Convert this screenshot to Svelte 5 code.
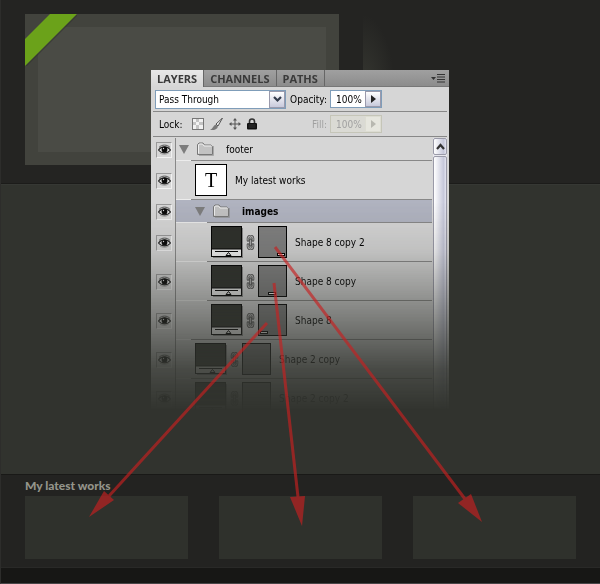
<script lang="ts">
  // ── Types ──────────────────────────────────────────────────────────

  type Kind = "group" | "text" | "shape";

  interface Layer {
    name: string;
    kind: Kind;
    level: number;
    rule: number;
    marker?: number;
    selected?: boolean;
  }

  // ── Data ───────────────────────────────────────────────────────────

  const tabs = ["LAYERS", "CHANNELS", "PATHS"];

  // level indents the row, rule is the depth its bottom line starts at
  const layers: Layer[] = [
    { name: "footer", kind: "group", level: 0, rule: 0 },
    { name: "My latest works", kind: "text", level: 1, rule: 0 },
    { name: "images", kind: "group", level: 1, rule: 1, selected: true },
    { name: "Shape 8 copy 2", kind: "shape", level: 2, rule: 1, marker: 18 },
    { name: "Shape 8 copy", kind: "shape", level: 2, rule: 1, marker: 9 },
    { name: "Shape 8", kind: "shape", level: 2, rule: 0, marker: 1 },
    { name: "Shape 2 copy", kind: "shape", level: 1, rule: 0 },
    { name: "Shape 2 copy 2", kind: "shape", level: 1, rule: 0 },
  ];

  const works = [1, 2, 3];

  let active = $state("LAYERS");
  let blend = $state("Pass Through");
  let opacity = $state("100%");
  let fill = $state("100%");
</script>

<div class="page">
  <!-- Site mockup -->
  <header class="hero">
    <div class="slide">
      <svg class="ribbon" viewBox="0 0 52 52" aria-hidden="true">
        <path d="M26 0H54L0 54V27Z" fill="#2e302b" opacity="0.5" />
        <path d="M25 0H52L0 52V25Z" fill="#6ba21a" />
      </svg>
    </div>
    <div class="glow"></div>
  </header>

  <main class="middle"></main>

  <footer class="footer">
    <h2>My latest works</h2>
    <div class="works">
      {#each works as work (work)}
        <div class="work"></div>
      {/each}
    </div>
  </footer>
  <div class="bottom"></div>

  <!-- Layers panel -->
  <section class="panel">
    <div class="tabs">
      {#each tabs as tab}
        <button class="tab" class:active={active === tab} onclick={() => (active = tab)}>
          {tab}
        </button>
      {/each}
      <button class="menu" aria-label="Panel menu">
        <svg width="14" height="9" viewBox="0 0 14 9">
          <path d="M0 3H5L2.500 6Z" fill="#333" />
          <path d="M6 .5H14M6 3H14M6 5.500H14M6 8H14" stroke="#333" />
        </svg>
      </button>
    </div>

    <div class="controls">
      <div class="combo">
        <select aria-label="Blend mode" bind:value={blend}>
          <option>Pass Through</option>
          <option>Normal</option>
        </select>
        <span class="arrow">
          <svg width="9" height="7" viewBox="0 0 9 7"><path d="M1 1L4.500 4.500L8 1" fill="none" stroke="#333c4c" stroke-width="2.200" /></svg>
        </span>
      </div>
      <div class="field">
        <label for="opacity">Opacity:</label>
        <div class="amount">
          <input id="opacity" type="text" bind:value={opacity} />
          <button aria-label="Opacity slider">
            <svg width="5" height="8" viewBox="0 0 5 8"><path d="M0 0L5 4L0 8Z" fill="#222" /></svg>
          </button>
        </div>
      </div>
    </div>

    <div class="controls">
      <div class="locks">
        <span class="locks-label">Lock:</span>
        <button aria-label="Lock transparent pixels">
          <svg width="12" height="12" viewBox="0 0 12 12">
            <rect x=".5" y=".5" width="11" height="11" fill="#f2f2f2" stroke="#777" />
            <path d="M1 4H4V1H7V4H11V7H7V11H4V7H1Z" fill="#c4c4c4" />
            <rect x="4" y="4" width="3" height="3" fill="#f2f2f2" />
          </svg>
        </button>
        <button aria-label="Lock image pixels">
          <svg width="13" height="13" viewBox="0 0 13 13">
            <path d="M12.500 0L6 6L8 8Z" fill="#eee" stroke="#555" />
            <path d="M5.500 6.500L8 8.500C7 11.500 4 12.500 0 12C3 10.500 3 8 5.500 6.500Z" fill="#777" />
          </svg>
        </button>
        <button aria-label="Lock position">
          <svg width="12" height="12" viewBox="0 0 12 12">
            <path d="M6 1V11M1 6H11" stroke="#555" />
            <path d="M6 0L8 2.500H4ZM6 12L8 9.500H4ZM0 6L2.500 4V8ZM12 6L9.500 4V8Z" fill="#555" />
          </svg>
        </button>
        <button aria-label="Lock all">
          <svg width="10" height="12" viewBox="0 0 10 12">
            <path d="M2.500 6V3.500A2.500 2.500 0 0 1 7.500 3.500V6" fill="none" stroke="#333" stroke-width="1.600" />
            <rect x="0" y="5" width="10" height="6.500" rx="1" fill="#111" />
            <path d="M1.500 7H8.500M1.500 9H8.500" stroke="#555" stroke-width=".6" />
          </svg>
        </button>
      </div>
      <div class="field disabled">
        <label for="fill">Fill:</label>
        <div class="amount">
          <input id="fill" type="text" bind:value={fill} disabled />
          <button aria-label="Fill slider" disabled>
            <svg width="5" height="8" viewBox="0 0 5 8"><path d="M0 0L5 4L0 8Z" fill="#b8b8b0" /></svg>
          </button>
        </div>
      </div>
    </div>

    <div class="list">
      <ul>
        {#each layers as layer}
          <li class="{layer.kind} level-{layer.level} rule-{layer.rule}" class:selected={layer.selected}>
            <div class="visibility">
              <button aria-label="Toggle {layer.name}">
                <svg width="13" height="11" viewBox="0 0 13 11">
                  <path d="M1 3.500C3.500 .3 9.500 .3 12 3.500" fill="none" stroke="#555" />
                  <path d="M.5 6C3.500 1.800 9.500 1.800 12.500 6C9.500 9.800 3.500 9.800 .5 6Z" fill="#e8e8e8" stroke="#222" stroke-width="1.200" />
                  <circle cx="6.500" cy="5.500" r="2.900" fill="#080808" />
                  <circle cx="5.500" cy="4.500" r=".7" fill="#ddd" />
                  <path d="M2 9C5 11 9 10.500 11 8.500" fill="none" stroke="#888" stroke-width=".7" />
                </svg>
              </button>
            </div>

            <div class="content">
              {#if layer.kind === "group"}
                <svg class="twirl" width="10" height="9" viewBox="0 0 10 9"><path d="M0 0H10L5 9Z" fill="#7d7d7d" /></svg>
                <svg class="folder" width="17" height="14" viewBox="0 0 17 14">
                  <path d="M2 13.500H16.500V4" fill="none" stroke="#888" opacity=".6" />
                  <path d="M.5 12.500V2.500L2 1H6L7.500 3H14L15.500 4.500V12.500Z" fill="#c2c2c2" stroke="#777" />
                  <path d="M1.500 11.500V3L2.500 2H5.500L7 4H14.500" fill="none" stroke="#eee" />
                </svg>
              {:else if layer.kind === "text"}
                <span class="type-thumb">T</span>
              {:else}
                <svg width="32" height="32" viewBox="0 0 32 32">
                  <rect x="2" y="2" width="30" height="30" fill="#000" opacity=".35" />
                  <rect x=".5" y=".5" width="30" height="30" fill="#f4f4f4" stroke="#000" />
                  <rect x="1" y="1" width="29" height="22" fill="#2d2f2a" />
                  <path d="M1 23H30" stroke="#000" />
                  <path d="M4 25.500H27M15 29.500L17.500 26.500L20 29.500Z" fill="none" stroke="#000" />
                </svg>
                <svg class="link" width="9" height="15" viewBox="0 0 9 15">
                  <path d="M2 5.500V3.500A2.500 2.500 0 0 1 7 3.500V5.500M2 9.500V11.500A2.500 2.500 0 0 0 7 11.500V9.500" fill="none" stroke="#555" stroke-width="2.600" stroke-linecap="round" />
                  <path d="M2 5.500V3.500A2.500 2.500 0 0 1 7 3.500V5.500M2 9.500V11.500A2.500 2.500 0 0 0 7 11.500V9.500" fill="none" stroke="#c4c4c4" stroke-width="1" />
                  <path d="M4.500 3.500V11.500" stroke="#333" stroke-width="2.400" />
                  <path d="M4.500 4.500V10.500" stroke="#ccc" stroke-width=".8" />
                </svg>
                <svg width="29" height="32" viewBox="0 0 29 32">
                  <rect x=".5" y=".5" width="28" height="31" fill="#808080" stroke="#000" />
                  {#if layer.marker}
                    <rect x={layer.marker + 1.5} y="27.500" width="7" height="2" fill="#fff" stroke="#000" />
                  {/if}
                </svg>
              {/if}
              <span class="name">{layer.name}</span>
            </div>
          </li>
        {/each}
      </ul>

      <div class="scrollbar">
        <button aria-label="Scroll up">
          <svg width="9" height="7" viewBox="0 0 9 7"><path d="M1 6L4.500 2L8 6" fill="none" stroke="#333" stroke-width="2.200" /></svg>
        </button>
        <div class="thumb"></div>
      </div>
    </div>
  </section>

  <!-- Arrows from each mask to its box -->
  <svg class="arrows" width="600" height="584" viewBox="0 0 600 584" aria-hidden="true">
    <g stroke="#c82020" stroke-width="3">
      <path d="M267 323L109 496" />
      <path d="M274 283L298 497" />
      <path d="M275 247L465 499" />
    </g>
    <g fill="#c82020">
      <path d="M89 517L104 491L114 500Z" />
      <path d="M302 526L290 497L305 496Z" />
      <path d="M482 522L458 503L471 494Z" />
    </g>
  </svg>
</div>

<style>
  :global(body) {
    background: #232321;
  }

  .page {
    position: relative;
    display: flex;
    flex-direction: column;
    min-height: 100vh;
    box-sizing: border-box;
    border-left: 1px solid #2d2d2b;
    border-bottom: 1px solid #484648;
    background: #242422;
    font-family: "DejaVu Sans Condensed", "Liberation Sans", sans-serif;
    font-size: 10px;
    color: #000;
  }

  button,
  input,
  select {
    margin: 0;
    padding: 0;
    border: 0;
    background: none;
    font: inherit;
    color: inherit;
  }

  button {
    display: flex;
    align-items: center;
    justify-content: center;
  }

  svg {
    display: block;
    flex-shrink: 0;
  }

  /* ── Site mockup ─────────────────────────────────────────────────── */

  .hero {
    display: flex;
    gap: 24px;
    padding: 14px 24px 18px;
    border-bottom: 1px solid #1c1c1a;
  }

  .slide {
    box-sizing: border-box;
    width: 314px;
    height: 151px;
    border: 13px solid #42433d;
    background: #4a4b45;
    position: relative;
  }

  .ribbon {
    position: absolute;
    top: -13px;
    left: -13px;
    width: 52px;
    height: 52px;
  }

  .glow {
    width: 32px;
    background: radial-gradient(ellipse at left center, #363731, #242422 70%);
  }

  .middle {
    flex: 1;
    border-top: 1px solid #363834;
    background: #31332e;
  }

  .footer {
    padding: 4px 24px 8px;
    border-top: 1px solid #191917;
    border-bottom: 1px solid #292927;
    background: #232321;
  }

  .footer h2 {
    margin: 0 0 4px;
    font-family: Lato, sans-serif;
    font-size: 12px;
    font-weight: 900;
    line-height: 13px;
    color: #93948a;
  }

  .works {
    display: grid;
    grid-template-columns: repeat(3, 1fr);
    gap: 31px;
  }

  .work {
    height: 63px;
    background: #2f312c;
  }

  .bottom {
    height: 15px;
    background: #171715;
  }

  /* ── Panel ───────────────────────────────────────────────────────── */

  .panel {
    position: absolute;
    top: 70px;
    left: 0;
    right: 1px;
    width: 298px;
    margin: 0 auto;
    background: #d6d6d6;
    mask-image: linear-gradient(
      #000 38%,
      rgb(0 0 0 / 87%) 52%,
      rgb(0 0 0 / 64%) 63%,
      rgb(0 0 0 / 38%) 75%,
      rgb(0 0 0 / 14%) 86%,
      transparent 98%
    );
  }

  .tabs {
    display: flex;
    height: 17px;
    box-sizing: border-box;
    border-bottom: 1px solid #777;
    background: linear-gradient(#a0a0a0, #8c8c8c);
  }

  .tab {
    padding: 0 6px;
    border-right: 1px solid #666;
    font-family: "Open Sans", sans-serif;
    font-size: 11px;
    font-weight: 700;
    color: #3a3a3a;
  }

  .tab.active {
    height: 17px;
    background: linear-gradient(#e8e8e8, #d6d6d6);
  }

  .menu {
    margin-left: auto;
    padding-right: 4px;
  }

  /* ── Controls ────────────────────────────────────────────────────── */

  .controls {
    display: flex;
    align-items: center;
    justify-content: space-between;
    height: 25px;
    margin: 0 2px;
    padding: 0 65px 0 2px;
    box-sizing: border-box;
    border-bottom: 1px solid #888;
  }

  .combo {
    display: flex;
    box-sizing: border-box;
    width: 131px;
    height: 19px;
    border: 1px solid #7f9db9;
    background: #fff;
  }

  .combo select {
    flex: 1;
    appearance: none;
    padding-left: 3px;
  }

  .arrow,
  .amount button {
    display: flex;
    align-items: center;
    justify-content: center;
    width: 16px;
    border: 1px solid #9a9aac;
    background: linear-gradient(#fff, #c8cadc);
    box-sizing: border-box;
  }

  .field {
    display: flex;
    align-items: center;
    gap: 3px;
  }

  .amount {
    display: flex;
    box-sizing: border-box;
    width: 52px;
    height: 18px;
    border: 1px solid #7f9db9;
    background: #fff;
  }

  .amount input {
    flex: 1;
    min-width: 0;
    padding-left: 5px;
  }

  .disabled {
    color: #a0a0a0;
  }

  .disabled .amount {
    border-color: #c5c5b8;
    background: #dadad4;
  }

  .disabled .amount button {
    border-color: #dcdcd2;
    background: #e6e6de;
  }

  .locks {
    display: flex;
    align-items: center;
    gap: 6px;
    padding-left: 4px;
  }

  .locks-label {
    padding-right: 3px;
  }

  /* ── Layer list ──────────────────────────────────────────────────── */

  .list {
    display: grid;
    grid-template-columns: 1fr 14px;
    gap: 1px;
    padding-right: 2px;
    border-top: 1px solid #d6d6d6;
  }

  ul {
    margin: 0;
    padding: 0;
    list-style: none;
  }

  li {
    display: flex;
    height: 39px;
  }

  li.group {
    height: 23px;
  }

  .visibility {
    display: flex;
    align-items: center;
    box-sizing: border-box;
    width: 25px;
    padding-left: 5px;
    border-right: 1px solid #888;
  }

  .visibility button {
    box-sizing: border-box;
    width: 16px;
    height: 16px;
    border: 1px solid;
    border-color: #999 #f0f0f0 #f0f0f0 #999;
  }

  .content {
    --rule: 15px;
    flex: 1;
    display: flex;
    align-items: center;
    padding-bottom: 1px;
    background: linear-gradient(to right, #ececec var(--rule), #888 var(--rule)) bottom / 100% 1px no-repeat;
  }

  .rule-1 .content {
    --rule: 31px;
  }

  .level-0 .content {
    padding-left: 3px;
  }

  .level-1 .content {
    padding-left: 19px;
  }

  .level-2 .content {
    padding-left: 35px;
  }

  .selected .content {
    background-color: #b0b3c0;
    font-weight: 700;
  }

  .folder {
    margin: 0 12px 0 8px;
  }

  .link {
    margin: 0 3px;
  }

  .type-thumb {
    box-sizing: border-box;
    width: 32px;
    height: 32px;
    border: 1px solid #000;
    background: #fff;
    font: 20px/30px "Liberation Serif", serif;
    text-align: center;
  }

  .text .name,
  .shape .name {
    margin-left: 8px;
  }

  /* ── Scrollbar ───────────────────────────────────────────────────── */

  .scrollbar {
    display: flex;
    flex-direction: column;
    gap: 1px;
    background: #e8e8ee;
  }

  .scrollbar button,
  .thumb {
    box-sizing: border-box;
    border: 1px solid #9a9aa8;
    border-radius: 2px;
    background: linear-gradient(to right, #fff, #c6c8da 80%, #e4e5f0);
  }

  .scrollbar button {
    height: 17px;
  }

  .thumb {
    flex: 1;
  }

  /* ── Arrows ──────────────────────────────────────────────────────── */

  .arrows {
    position: absolute;
    top: 0;
    left: -1px;
    opacity: 0.65;
    pointer-events: none;
  }
</style>
